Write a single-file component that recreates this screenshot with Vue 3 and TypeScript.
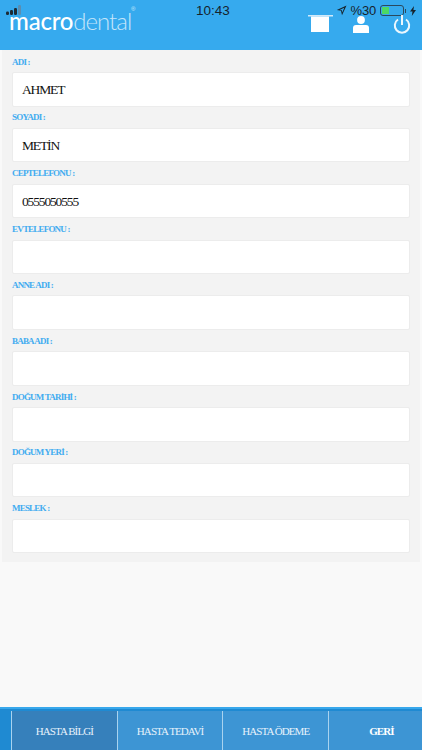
<script setup lang="ts">
const fields = [
  { label: 'ADI :', value: 'AHMET' },
  { label: 'SOYADI :', value: 'METİN' },
  { label: 'CEPTELEFONU :', value: '0555050555' },
  { label: 'EVTELEFONU :', value: '' },
  { label: 'ANNE ADI :', value: '' },
  { label: 'BABA ADI :', value: '' },
  { label: 'DOĞUM TARİHİ :', value: '' },
  { label: 'DOĞUM YERİ :', value: '' },
  { label: 'MESLEK :', value: '' }
]

const tabs = ['HASTA BİLGİ', 'HASTA TEDAVİ', 'HASTA ÖDEME', 'GERİ']
</script>

<template>
  <div class="app">
    <header class="header">
      <div class="status-bar">
        <div class="logo">
          <svg class="signal" width="16" height="10" viewBox="0 0 16 10">
            <rect x="0" y="6.5" width="3" height="3.5" rx="1.2" fill="#1c2a35" />
            <rect x="4" y="5" width="3" height="5" rx="1.2" fill="#1c2a35" />
            <rect x="8" y="3" width="3" height="7" rx="1.2" fill="#1c2a35" />
            <rect x="12" y="0" width="3" height="10" rx="1.2" fill="#5b8db0" />
          </svg>
          <span class="logo-text"><b>macro</b>dental</span>
          <span class="logo-reg">®</span>
        </div>
        <div class="clock">10:43</div>
        <div class="status-right">
          <svg width="11" height="11" viewBox="0 0 11 11"><path d="M10.5 .5 L.8 5 L5 5.8 L6 10.2 Z M8.2 2.8 L3.6 4.9 L5.9 5.2 L6.4 7.4 Z" fill="#16232c" fill-rule="evenodd" /></svg>
          <span class="percent">%30</span>
          <div class="battery"><div class="battery-fill"></div></div>
          <div class="battery-cap"></div>
          <svg width="6" height="10" viewBox="0 0 6 10"><path d="M4 0 L0 5.6 H2.5 L1.8 10 L6 4 H3.4 Z" fill="#16232c" /></svg>
        </div>
      </div>
      <div class="actions">
        <svg class="action-board" width="26" height="18" viewBox="0 0 26 18">
          <rect x="0" y="0" width="25" height="1.5" fill="#cfe9fa" />
          <rect x="3" y="1.5" width="18" height="15.5" fill="#fff" />
        </svg>
        <svg class="action-user" width="16" height="18" viewBox="0 0 16 18">
          <circle cx="8" cy="4" r="3.9" fill="#fff" />
          <path d="M0 17 V12 Q0 9 3 9 H13 Q16 9 16 12 V17 Z" fill="#fff" />
        </svg>
        <svg class="action-power" width="18" height="20" viewBox="0 0 18 20">
          <path d="M5 4.5 A7.2 7.2 0 1 0 13 4.5" fill="none" stroke="#fff" stroke-width="2" opacity=".9" />
          <rect x="8" y="0" width="2" height="10" fill="#fff" opacity=".9" />
        </svg>
      </div>
    </header>

    <main class="content">
      <form class="panel">
        <div v-for="field in fields" :key="field.label" class="field">
          <label class="field-label">{{ field.label }}</label>
          <div class="field-input">{{ field.value }}</div>
        </div>
      </form>
    </main>

    <nav class="tabbar">
      <div class="tabs">
        <div
          v-for="(tab, i) in tabs"
          :key="tab"
          class="tab"
          :class="{ active: i === 0, back: i === 3 }"
        >
          {{ tab }}
        </div>
      </div>
    </nav>
  </div>
</template>

<style>
html,
body {
  margin: 0;
  padding: 0;
  background: #f9f9f9;
}
</style>

<style scoped>
* {
  box-sizing: border-box;
}

.app {
  display: flex;
  flex-direction: column;
  width: 422px;
  height: 750px;
  overflow: hidden;
  background: #f9f9f9;
  font-family: "Liberation Serif", serif;
}

.header {
  height: 50px;
  flex: none;
  background: #36aaee;
  padding: 0 11px 0 6px;
}

.status-bar {
  display: flex;
  align-items: flex-start;
  justify-content: space-between;
  height: 20px;
  position: relative;
}

.logo {
  position: relative;
  width: 130px;
  height: 32px;
}

.signal {
  position: absolute;
  left: 0;
  top: 5px;
}

.logo-text {
  position: absolute;
  left: 3px;
  top: 9px;
  font-family: "Lato", sans-serif;
  font-size: 24px;
  font-weight: 300;
  line-height: 24px;
  letter-spacing: -1px;
  color: #c4e5fa;
}

.logo-text b {
  font-weight: 500;
  letter-spacing: -0.2px;
  color: #fff;
}

.logo-reg {
  position: absolute;
  left: 125px;
  top: 6px;
  font-family: "Liberation Sans", sans-serif;
  font-size: 6px;
  color: #d3ecfb;
}

.clock {
  position: absolute;
  left: 190px;
  top: 2px;
  font-family: "Liberation Sans", sans-serif;
  font-size: 13.5px;
  line-height: 17px;
  color: #16232c;
}

.status-right {
  display: flex;
  align-items: center;
  position: absolute;
  right: -5px;
  top: 3px;
  height: 15px;
  font-family: "Liberation Sans", sans-serif;
}

.percent {
  margin-left: 4px;
  font-size: 13px;
  letter-spacing: -0.2px;
  color: #16232c;
}

.battery {
  margin-left: 4px;
  width: 24px;
  height: 11px;
  padding: 1px;
  border: 1px solid #2a4a5e;
  border-radius: 3px;
}

.battery-fill {
  width: 7px;
  height: 100%;
  background: #4cd964;
}

.battery-cap {
  width: 1px;
  height: 4px;
  margin: 0 4px 0 1px;
  background: #2a4a5e;
}

.actions {
  position: relative;
  height: 14px;
}

.action-board {
  position: absolute;
  left: 302px;
  top: -5px;
}

.action-user {
  position: absolute;
  left: 347px;
  top: -4px;
}

.action-power {
  position: absolute;
  left: 387px;
  top: -5px;
}

.content {
  flex: 1;
  padding: 0 2px;
}

.panel {
  height: 512px;
  background: #f3f3f3;
  padding: 0 10px;
}

.field {
  height: 55.85px;
  padding-top: 6.5px;
}

.field-label {
  display: block;
  height: 15.5px;
  font-size: 9px;
  line-height: 11px;
  font-weight: 700;
  letter-spacing: -0.8px;
  color: #42acf0;
}

.field-input {
  height: 34.5px;
  padding: 0 9px;
  background: #fff;
  border: 1px solid #ececec;
  border-radius: 2px;
  font-size: 13.5px;
  line-height: 33px;
  letter-spacing: -1.15px;
  color: #111;
}

.tabbar {
  flex: none;
  height: 43px;
  padding-top: 2px;
  background: #1f8ad2;
  border-top: 2px solid #38a8ec;
}

.tabs {
  display: grid;
  grid-template-columns: repeat(4, 105.7px);
  height: 100%;
  margin-left: 11px;
}

.tab {
  display: flex;
  align-items: center;
  justify-content: center;
  background: #3d95d4;
  border-left: 1px solid #a9d3ef;
  font-size: 11px;
  letter-spacing: -0.9px;
  color: #e6f2fb;
}

.tab.active {
  background: #3680bb;
}

.tab.back {
  font-weight: 700;
  color: #fff;
}
</style>
